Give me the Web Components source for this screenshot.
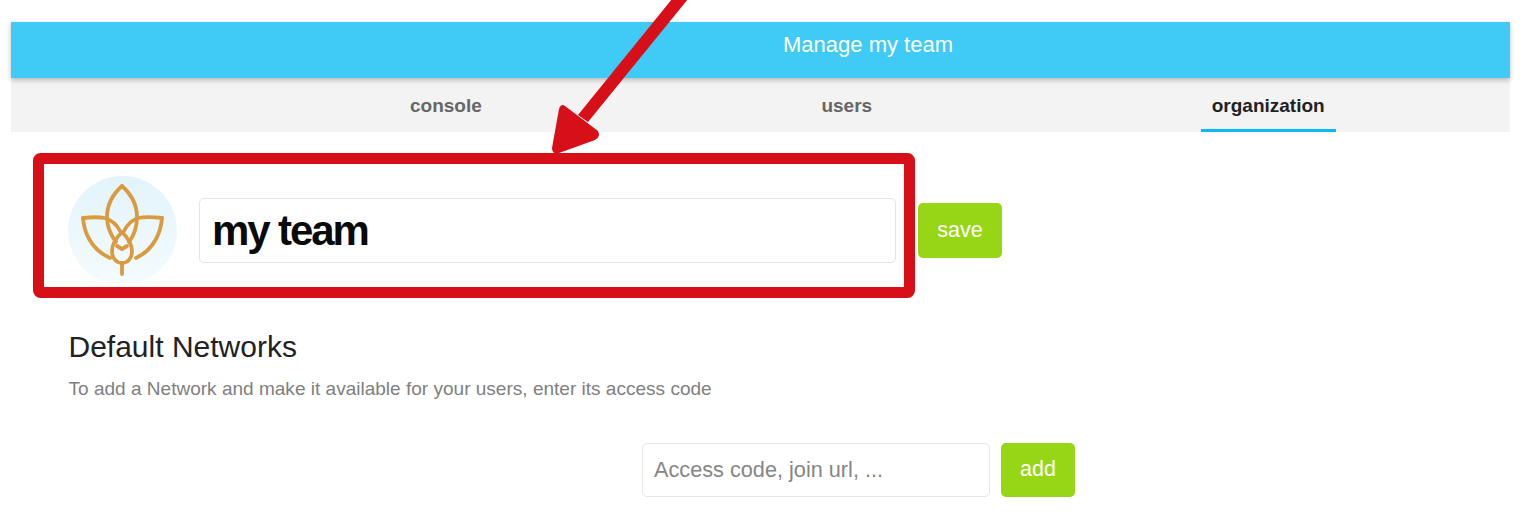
<!DOCTYPE html>
<html>
<head>
<meta charset="utf-8">
<title>Manage my team</title>
<style>
  html, body { margin: 0; padding: 0; background: #fff; }
  body { font-family: 'Liberation Sans', Arial, sans-serif; height: 530px; overflow: hidden; position: relative; }
  #page { padding: 22px 26px 0 11px; }
</style>
</head>
<body>
<div id="page">
  <app-bar>Manage my team</app-bar>
  <tab-bar>
    <tab-item>console</tab-item>
    <tab-item>users</tab-item>
    <tab-item active>organization</tab-item>
  </tab-bar>
  <team-form name="my team"></team-form>
  <network-panel></network-panel>
</div>
<callout-overlay></callout-overlay>
<script>
class AppBar extends HTMLElement {
  connectedCallback() {
    this.attachShadow({ mode: 'open' });
    this.shadowRoot.innerHTML = `
      <style>
        :host {
          display: flex;
          align-items: center;
          justify-content: center;
          position: relative;
          z-index: 1;
          height: 56px;
          background: #3fcbf5;
          color: #fff;
          font-size: 22px;
          box-shadow: 0 2px 5px rgba(0, 0, 0, 0.25);
        }
        div { padding: 0 0 10px 215px; }
      </style>
      <div><slot></slot></div>
    `;
  }
}
customElements.define('app-bar', AppBar);

class TabBar extends HTMLElement {
  connectedCallback() {
    this.attachShadow({ mode: 'open' });
    this.shadowRoot.innerHTML = `
      <style>
        :host {
          display: flex;
          gap: 317.6px;
          height: 54px;
          padding-left: 388px;
          background: #f3f3f3;
        }
      </style>
      <slot></slot>
    `;
  }
}
customElements.define('tab-bar', TabBar);

class TabItem extends HTMLElement {
  connectedCallback() {
    this.attachShadow({ mode: 'open' });
    this.shadowRoot.innerHTML = `
      <style>
        :host {
          display: block;
          box-sizing: border-box;
          height: 54px;
          padding: 17px 11px 0;
          color: #666;
          font-size: 19px;
          font-weight: 700;
          line-height: 21px;
        }
        :host([active]) {
          color: #222;
          border-bottom: 3px solid #0bb8f8;
          border-radius: 3px 3px 0 0;
        }
      </style>
      <slot></slot>
    `;
  }
}
customElements.define('tab-item', TabItem);

class TeamLogo extends HTMLElement {
  connectedCallback() {
    this.attachShadow({ mode: 'open' });
    this.shadowRoot.innerHTML = `
      <style>
        :host {
          display: block;
          width: 109px;
          height: 109px;
          flex: none;
          border-radius: 50%;
          background: linear-gradient(#e2f4fb, #f5fbfe);
        }
        svg { display: block; filter: blur(0.4px); }
      </style>
      <svg width="109" height="109" viewBox="68 176 109 109" fill="none" stroke="#d99b40" stroke-width="3.800" stroke-linecap="round" stroke-linejoin="round">
        <path d="M122 186C112 195 107 206 107 217C107 226 110 234 116 242"/>
        <path d="M122 186C132 195 137 206 137 217C137 226 135 234 129 242"/>
        <path d="M83 218C92 217 99 217 105 218C111 220 117 225 120 231"/>
        <path d="M83 218C84 231 90 249 110 258"/>
        <path d="M162 218C153 217 144 217 138 218C132 220 127 225 124 231"/>
        <path d="M162 218C161 231 155 249 136 258"/>
        <path d="M122 232C116 238 112 244 112 251C112 258 116 263 122 263C128 263 132 258 132 251C132 244 128 238 122 232Z"/>
        <path d="M122 263V274"/>
        <path d="M117 246L122 249L127 246"/>
      </svg>
    `;
  }
}
customElements.define('team-logo', TeamLogo);

class TeamForm extends HTMLElement {
  connectedCallback() {
    this.attachShadow({ mode: 'open' });
    this.shadowRoot.innerHTML = `
      <style>
        :host {
          display: flex;
          align-items: center;
          gap: 22px;
          padding: 44px 0 0 57px;
        }
        input {
          box-sizing: border-box;
          width: 697px;
          height: 65px;
          padding: 0 12px;
          border: 1px solid #e4e4e4;
          border-radius: 5px;
          outline: none;
          color: #0a0a0a;
          font: 700 42px 'Liberation Sans', Arial, sans-serif;
          letter-spacing: -2.1px;
        }
        button {
          width: 84px;
          height: 55px;
          padding: 0 0 2px;
          border: 0;
          border-radius: 5px;
          background: #97d615;
          color: #fff;
          font: 21.600px 'Liberation Sans', Arial, sans-serif;
        }
      </style>
      <team-logo></team-logo>
      <input value="${this.getAttribute('name')}">
      <button>save</button>
    `;
  }
}
customElements.define('team-form', TeamForm);

class NetworkPanel extends HTMLElement {
  connectedCallback() {
    this.attachShadow({ mode: 'open' });
    this.shadowRoot.innerHTML = `
      <style>
        :host {
          display: block;
          padding: 45px 0 0 57.500px;
        }
        h2 {
          margin: 0;
          color: #222;
          font-size: 30px;
          font-weight: 400;
          line-height: 34px;
        }
        p {
          margin: 14px 0 0;
          color: #808080;
          font-size: 19.050px;
          line-height: 22px;
        }
        .add {
          display: flex;
          gap: 11px;
          margin: 43px 0 0 573.500px;
        }
        input {
          box-sizing: border-box;
          width: 348px;
          height: 54px;
          padding: 0 11px;
          border: 1px solid #e6e6e6;
          border-radius: 5px;
          outline: none;
          font: 21.700px 'Liberation Sans', Arial, sans-serif;
        }
        input::placeholder { color: #868686; opacity: 1; }
        button {
          width: 74px;
          height: 54px;
          padding: 0 0 2px;
          border: 0;
          border-radius: 5px;
          background: #97d615;
          color: #fff;
          font: 21.600px 'Liberation Sans', Arial, sans-serif;
        }
      </style>
      <h2>Default Networks</h2>
      <p>To add a Network and make it available for your users, enter its access code</p>
      <div class="add">
        <input placeholder="Access code, join url, ...">
        <button>add</button>
      </div>
    `;
  }
}
customElements.define('network-panel', NetworkPanel);

// red annotation drawn over the screenshot
class CalloutOverlay extends HTMLElement {
  connectedCallback() {
    this.attachShadow({ mode: 'open' });
    this.shadowRoot.innerHTML = `
      <style>
        :host {
          position: absolute;
          left: 0;
          top: 0;
          z-index: 2;
          pointer-events: none;
        }
        svg { display: block; }
      </style>
      <svg width="1536" height="530" viewBox="0 0 1536 530" fill="#d60f19">
        <rect x="38.500" y="158.500" width="871" height="134" rx="2" fill="none" stroke="#d60f19" stroke-width="11"/>
        <path d="M672 -1H688L588 122L578 115Z"/>
        <path d="M565 106L598 131Q601 137 595 140L559 153Q552 155 552 148L559 109Q561 103 565 106Z"/>
      </svg>
    `;
  }
}
customElements.define('callout-overlay', CalloutOverlay);
</script>
</body>
</html>
